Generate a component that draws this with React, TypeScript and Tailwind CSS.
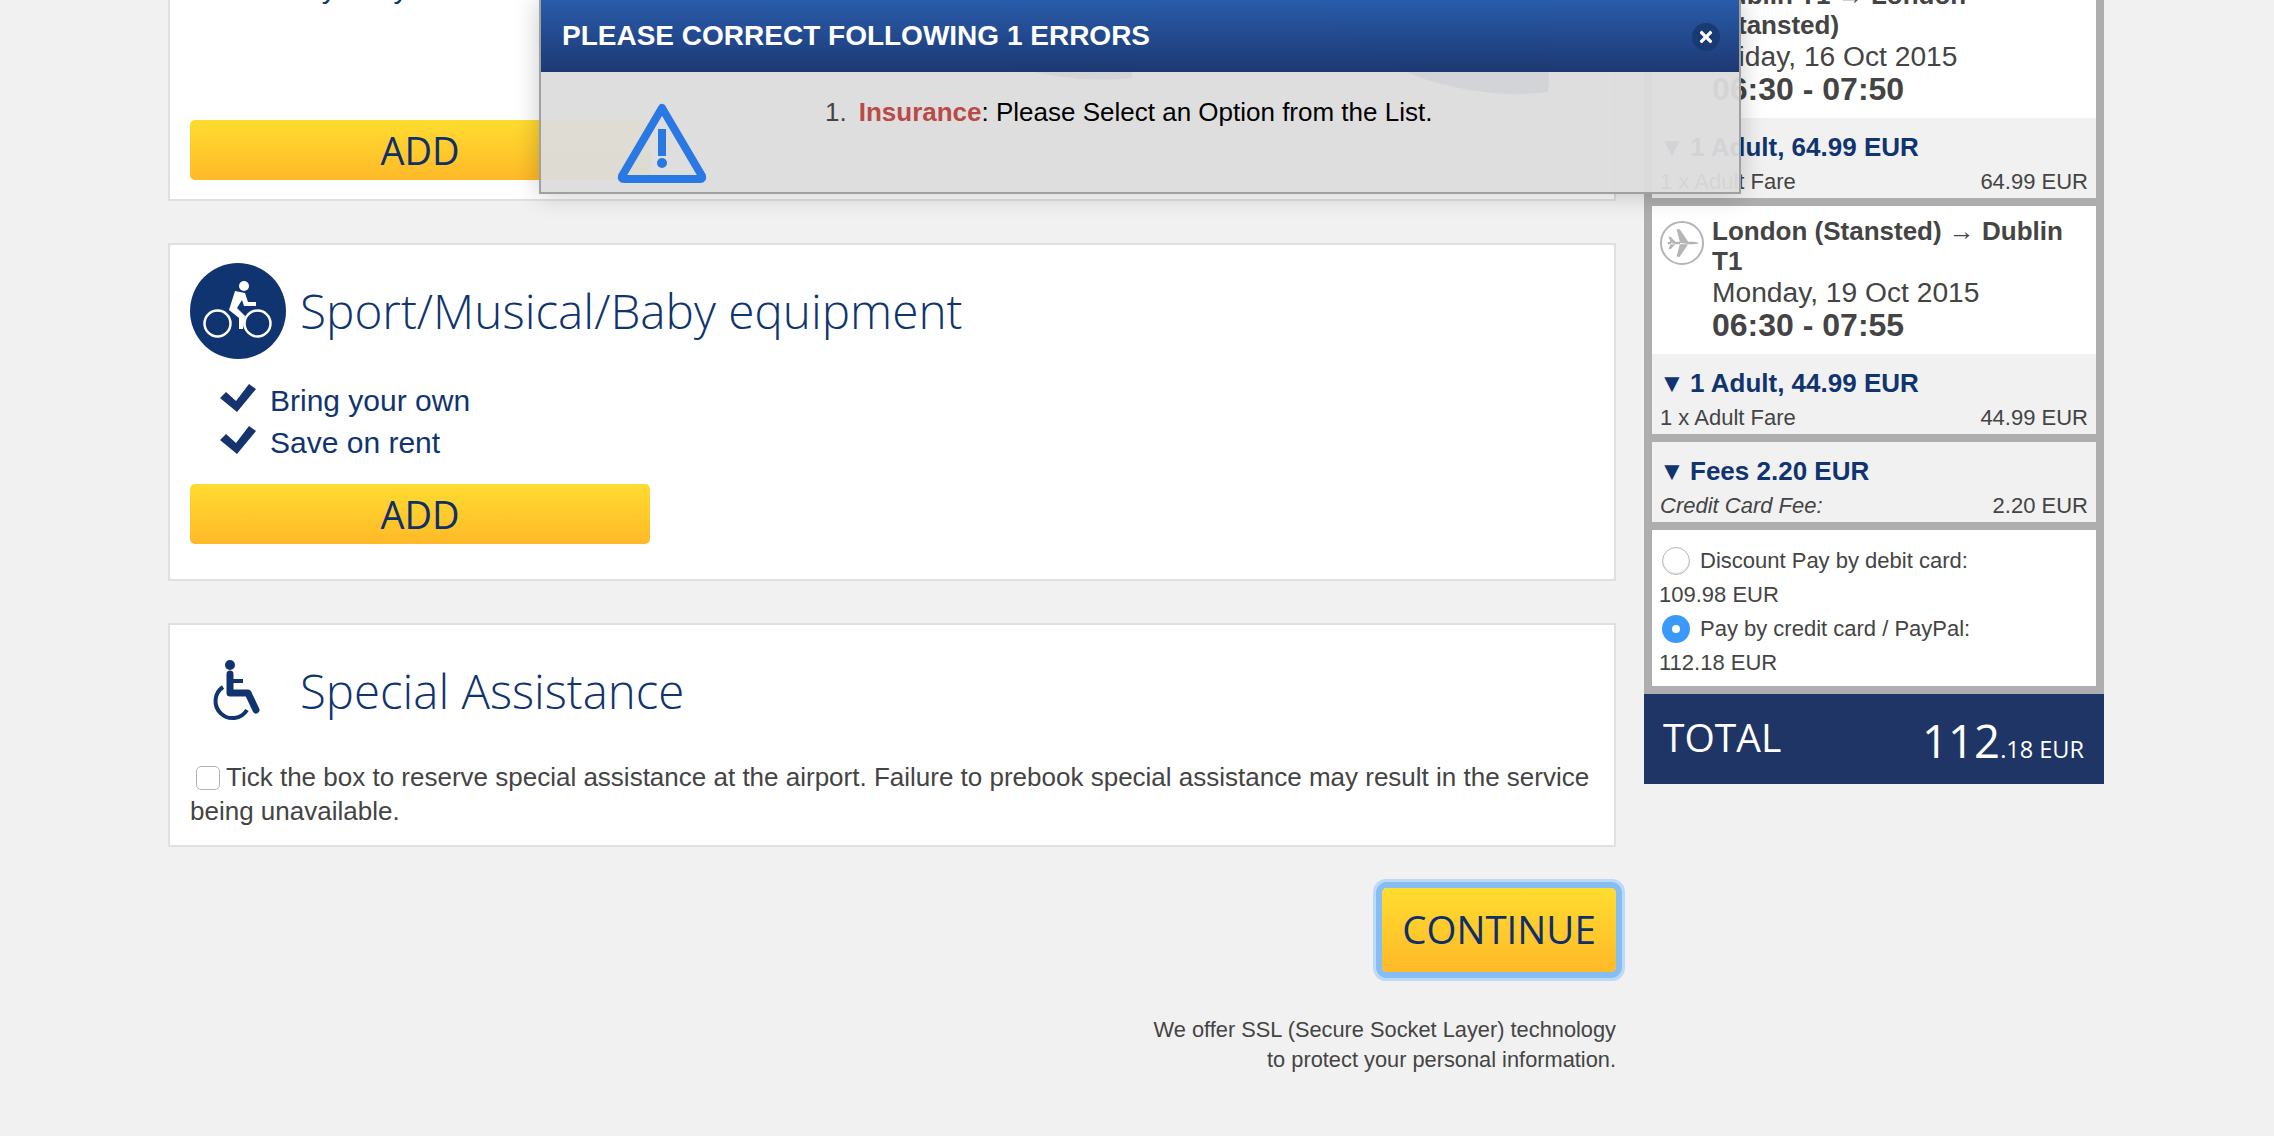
import React from "react";
import { FaTimes } from "react-icons/fa";

const sans = "font-['Liberation_Sans',Arial,sans-serif]";

function Check() {
  return (
    <svg viewBox="0 0 36 28" className="w-[36px] h-[28px] mt-[4px] shrink-0 fill-[#15346e]">
      <polygon points="0,14 6,8 16,17 29,0 36,5 17,28" />
    </svg>
  );
}

function AddButton() {
  return (
    <button className="w-[460px] h-[60px] rounded-[5px] bg-gradient-to-b from-[#ffdc30] to-[#ffb928] text-[#0f2f6b] text-[38px] font-['Open_Sans',sans-serif] leading-[60px]">
      ADD
    </button>
  );
}

function Bike() {
  return (
    <div className="w-[96px] h-[96px] rounded-full bg-[#10346f] flex items-center justify-center shrink-0">
      <svg viewBox="0 0 96 96" className="w-[96px] h-[96px]">
        <circle cx="27.5" cy="60.5" r="13" fill="none" stroke="#fff" strokeWidth="2.5" />
        <circle cx="67.5" cy="60.5" r="13" fill="none" stroke="#fff" strokeWidth="2.5" />
        <circle cx="54" cy="23" r="5" fill="#fff" />
        <path d="M45 28 L55 30 L58 39 L66 39 L66 43 L54 43 L52 37 L47 45 L55 53 L53 66 L49 66 L49 55 L39 47 Z" fill="#fff" />
      </svg>
    </div>
  );
}

function Wheelchair() {
  return (
    <div className="w-[96px] h-[96px] flex items-center justify-center shrink-0">
      <svg viewBox="0 0 52 62" className="w-[52px] h-[62px]">
        <circle cx="18" cy="5" r="5" fill="#10346f" />
        <path d="M18 14 V33 H36 L44 50" fill="none" stroke="#10346f" strokeWidth="7" strokeLinecap="round" strokeLinejoin="round" />
        <path d="M18 21 H31" fill="none" stroke="#10346f" strokeWidth="4" />
        <path d="M11 27 A17 17 0 1 0 35 50" fill="none" stroke="#10346f" strokeWidth="4" />
      </svg>
    </div>
  );
}

function Plane() {
  return (
    <svg viewBox="0 0 44 44" className="w-[40px] h-[40px]">
      <path d="M7 20.5 H34 Q40 21 40.5 22 Q40 23 34 23.5 H7 L6 22 Z M10 22 L7 15 H9.5 L15 21 Z M10 22 L7 29 H9.5 L15 23 Z M20 22 L16 7 H19.5 L29 21 Z M20 22 L16 37 H19.5 L29 23 Z" fill="#b5b5b5" />
    </svg>
  );
}

function Arrow() {
  return <span className="inline-block w-[30px] -ml-[1px] mr-[1px] text-[26px]">▼</span>;
}

function FlightCard({ title, date, time, pax, fare }: { title: string; date: string; time: string; pax: string; fare: string }) {
  return (
    <div>
      <div className="bg-white h-[148px] pt-[10px] pl-[8px] pr-[8px] flex text-[#444]">
        <div className="w-[44px] h-[44px] mt-[5px] rounded-full border-[2px] border-[#b5b5b5] flex items-center justify-center shrink-0">
          <Plane />
        </div>
        <div className="ml-[8px]">
          <div className="text-[26px] leading-[30px] font-bold">{title}</div>
          <div className="text-[28.2px] leading-[32px]">{date}</div>
          <div className="text-[32px] leading-[34px] font-bold">{time}</div>
        </div>
      </div>
      <div className="bg-[#f1f1f1] h-[80px] px-[8px] pt-[13px]">
        <div className="text-[26px] leading-[32px] font-bold text-[#10346f]"><Arrow />{pax}</div>
        <div className="flex justify-between mt-[2px] text-[22px] leading-[33px] text-[#444]">
          <span>1 x Adult Fare</span>
          <span>{fare}</span>
        </div>
      </div>
    </div>
  );
}

export default function App() {
  return (
    <div className={`relative h-[1136px] overflow-hidden bg-[#f1f1f1] ${sans}`}>
      <div className="flex items-start pl-[168px] -mt-[39px]">
        <main className="w-[1448px]">
          <section className="h-[240px] border-[2px] border-[#e0e0e0] bg-white px-[20px] pb-[19px] flex flex-col justify-between">
            <div className="pt-[4px] flex items-start gap-[14px] pl-[30px] text-[#10346f] text-[30px] leading-[42px]">
              <Check />
              <span>Easy to fly</span>
            </div>
            <AddButton />
          </section>

          <section className="mt-[42px] h-[338px] border-[2px] border-[#e0e0e0] bg-white px-[20px] pt-[18px]">
            <div className="flex items-center">
              <Bike />
              <h2 className="ml-[14px] text-[47.7px] font-light text-[#10346f] font-['Open_Sans',sans-serif]">Sport/Musical/Baby equipment</h2>
            </div>
            <ul className="mt-[21px] pl-[30px] text-[#10346f] text-[30px] leading-[42px]">
              <li className="flex items-start gap-[14px]"><Check />Bring your own</li>
              <li className="flex items-start gap-[14px]"><Check />Save on rent</li>
            </ul>
            <div className="mt-[20px]"><AddButton /></div>
          </section>

          <section className="mt-[42px] h-[224px] border-[2px] border-[#e0e0e0] bg-white px-[20px] pt-[18px]">
            <div className="flex items-center">
              <Wheelchair />
              <h2 className="ml-[14px] text-[47.4px] font-light text-[#10346f] font-['Open_Sans',sans-serif]">Special Assistance</h2>
            </div>
            <p className="mt-[21px] text-[26px] leading-[34px] text-[#444]">
              <span className="inline-block align-[-4px] w-[24px] h-[24px] mx-[6px] rounded-[5px] border border-[#b4b4b4] bg-white"></span>
              Tick the box to reserve special assistance at the airport. Failure to prebook special assistance may result in the service being unavailable.
            </p>
          </section>

          <div className="mt-[41px] flex justify-end">
            <button className="w-[234px] h-[84px] rounded-[5px] bg-gradient-to-b from-[#ffdc30] to-[#ffb928] text-[#0f2f6b] text-[38.5px] font-['Open_Sans',sans-serif] shadow-[0_0_0_6px_#85bdf5,0_0_0_9px_#bcd9f6]">
              CONTINUE
            </button>
          </div>
          <p className="mt-[43px] text-right text-[21.8px] leading-[30px] text-[#444]">
            We offer SSL (Secure Socket Layer) technology<br />to protect your personal information.
          </p>
        </main>

        <aside className="ml-[28px] mt-[1px] w-[460px]">
          <div className="bg-[#aeaeae] p-[8px] flex flex-col gap-[8px]">
            <FlightCard title="Dublin T1 → London (Stansted)" date="Friday, 16 Oct 2015" time="06:30 - 07:50" pax="1 Adult, 64.99 EUR" fare="64.99 EUR" />
            <FlightCard title="London (Stansted) → Dublin T1" date="Monday, 19 Oct 2015" time="06:30 - 07:55" pax="1 Adult, 44.99 EUR" fare="44.99 EUR" />
            <div className="bg-[#f1f1f1] h-[80px] px-[8px] pt-[13px]">
              <div className="text-[26px] leading-[32px] font-bold text-[#10346f]"><Arrow />Fees 2.20 EUR</div>
              <div className="flex justify-between mt-[2px] text-[22px] leading-[33px] text-[#444]">
                <span className="italic">Credit Card Fee:</span>
                <span>2.20 EUR</span>
              </div>
            </div>
            <div className="bg-white h-[156px] pt-[14px] pl-[7px] text-[22px] leading-[34px] text-[#444]">
              <div className="flex items-center">
                <span className="w-[28px] h-[28px] ml-[3px] mr-[10px] rounded-full border border-[#b8b8b8] bg-white shadow-[inset_0_-1px_2px_#ddd]"></span>
                Discount Pay by debit card:
              </div>
              <div>109.98 EUR</div>
              <div className="flex items-center">
                <span className="w-[28px] h-[28px] ml-[3px] mr-[10px] rounded-full bg-[#3b99fc] flex items-center justify-center">
                  <span className="w-[8px] h-[8px] rounded-full bg-white"></span>
                </span>
                Pay by credit card / PayPal:
              </div>
              <div>112.18 EUR</div>
            </div>
          </div>
          <div className="h-[90px] bg-[#1f3566] text-white flex items-start justify-between pl-[19px] pr-[20px] font-['Open_Sans',sans-serif]">
            <span className="text-[39px] leading-[50px] mt-[18px]">TOTAL</span>
            <span className="mt-[16px] leading-[60px]"><span className="text-[45.5px]">112</span><span className="text-[23.5px]">.18 EUR</span></span>
          </div>
        </aside>
      </div>

      <div className="absolute left-[539px] top-0 w-[1202px] h-[194px] border-x-[2px] border-b-[2px] border-[#a0a0a0] shadow-[0_0_24px_rgba(0,0,0,0.22)] bg-[#dcdcdcf2] overflow-hidden">
        <svg viewBox="0 0 1198 110" className="absolute left-0 top-0 w-[1198px] h-[110px] fill-[#0b2a66] opacity-[0.05]">
          <path d="M459 0 L455 60 Q520 85 590 78 L600 40 L620 0 Z" />
          <path d="M783 0 Q800 45 880 78 Q950 100 1007 92 L1012 0 Z" />
        </svg>
        <div className="relative h-[72px] -mx-[2px] bg-gradient-to-b from-[#1f55a8f2] to-[#15326ff5] flex items-center pl-[23px] text-white text-[28px] font-bold">
          PLEASE CORRECT FOLLOWING 1 ERRORS
          <span className="absolute right-[21px] top-[23px] w-[28px] h-[28px] rounded-full bg-[#1a3a73] flex items-center justify-center">
            <FaTimes className="w-[18px] h-[18px]" />
          </span>
        </div>
        <div className="relative flex">
          <svg viewBox="0 0 90 82" className="absolute left-[76px] top-[30px] w-[90px] h-[82px]">
            <path d="M45 6 L85 74 Q86 77 83 77 H7 Q4 77 5 74 Z" fill="none" stroke="#2a78e4" strokeWidth="8" strokeLinejoin="round" />
            <rect x="41" y="27" width="8" height="27" fill="#2a78e4" />
            <circle cx="45" cy="61" r="5" fill="#2a78e4" />
          </svg>
          <div className="ml-[284px] mt-[24px] text-[26px] leading-[32px] text-black">
            <span className="text-[#444]">1.</span>
            <span className="ml-[12px] font-bold text-[#b94a48]">Insurance</span>: Please Select an Option from the List.
          </div>
        </div>
      </div>
    </div>
  );
}
